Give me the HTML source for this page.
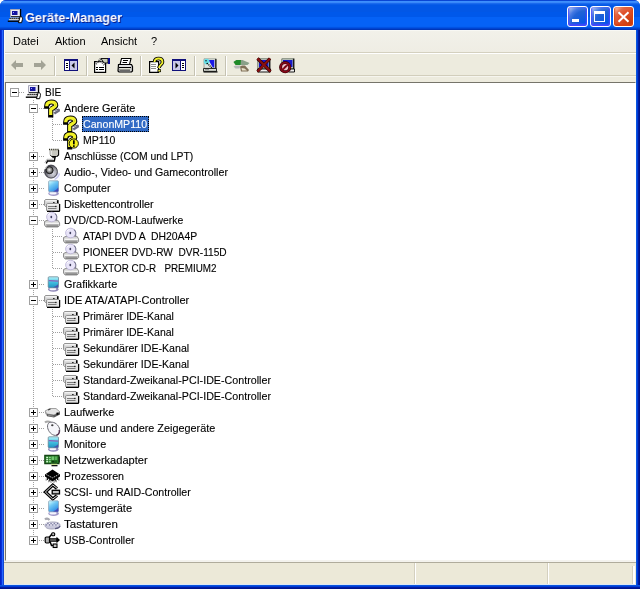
<!DOCTYPE html>
<html><head><meta charset="utf-8">
<style>
html,body{margin:0;padding:0;width:640px;height:589px;overflow:hidden;background:#fff;}
*{box-sizing:border-box;}
body{font-family:"Liberation Sans",sans-serif;font-size:11px;color:#000;position:relative;-webkit-font-smoothing:antialiased;}
#win{position:absolute;left:0;top:0;width:640px;height:589px;background:#0842D8;border-radius:6px 6px 0 0;overflow:hidden;}
.a{position:absolute;}
#title{left:0;top:0;width:640px;height:30px;
 background:linear-gradient(180deg,#0a46d4 0 1px,#3d8ffd 1px 2px,#3a88f8 2px 3px,#1a6aee 3px 4px,#0a5de8 4px 5px,#0257e6 5px 12px,#0058ea 12px 17px,#0562f6 17px 26px,#0560f2 26px 27px,#0052e4 27px 28px,#0044d0 28px 29px,#0036b8 29px 30px);}
#frameL{left:0;top:30px;width:4px;height:559px;background:linear-gradient(90deg,#0024c8 0 1px,#0830d8 1px 2px,#2466ff 2px 3px,#1446d0 3px 4px);}
#frameR{left:636px;top:30px;width:4px;height:559px;background:linear-gradient(90deg,#0855dd 0 1px,#003bda 1px 2px,#001ea0 2px 3px,#00138c 3px 4px);}
#frameB{left:0;top:585px;width:640px;height:4px;background:linear-gradient(180deg,#0855dd 0 1px,#003bda 1px 2px,#001ea0 2px 3px,#00138c 3px 4px);}
#ttext{will-change:transform;transform:scaleX(0.98);transform-origin:0 0;left:25px;top:10px;font-weight:bold;font-size:13px;color:#fff;text-shadow:1px 1px #0a1883;line-height:16px;white-space:pre;}
.tb{top:6px;width:21px;height:21px;border:1px solid #fff;border-radius:3px;
 background:radial-gradient(circle at 90% 90%,#0054e9 0%,#2263d5 55%,#4479e4 70%,#a3bbec 90%,#fff 100%);box-shadow:inset 0 -1px 2px 1px #4646ff;}
.tb.close{background:radial-gradient(circle at 90% 90%,#c43a08 0%,#e0502a 55%,#e06848 72%,#ffc0a8 92%,#fff 100%);box-shadow:inset 0 -1px 2px 1px #d84010;}
#menubar{left:4px;top:30px;width:632px;height:22px;background:linear-gradient(180deg,#F2F1EA,#EFEDE4);}
.mi{will-change:transform;top:36px;line-height:11px;white-space:pre;}
#toolbar{left:4px;top:54px;width:632px;height:28px;background:#EDEBDE;}
.tsep{top:56px;width:2px;height:20px;border-left:1px solid #C5C2B2;border-right:1px solid #fff;}
#tree{left:5px;top:82px;width:631px;height:479px;background:#fff;border-top:1px solid #76746A;border-left:1px solid #76746A;border-right:1px solid #fff;border-bottom:1px solid #F4F3EE;}
#status{left:4px;top:561px;width:632px;height:24px;background:#ECE9D8;border-top:1px solid #F4F3EE;}
.lbl{position:absolute;will-change:transform;-webkit-text-stroke:0.12px currentColor;height:16px;line-height:16px;white-space:pre;padding:0 1px 0 1px;}
.lbl span{position:relative;top:0px;display:inline-block;transform-origin:0 0;}
.sel{background:#316AC5;color:#fff;outline:1px dotted #000;outline-offset:-1px;}
.exp{position:absolute;width:9px;height:9px;border:1px solid #A0A0A0;background:#fff;}
.exp .ph{position:absolute;left:1px;top:3px;width:5px;height:1px;background:#000;}
.exp .pv{position:absolute;left:3px;top:1px;width:1px;height:5px;background:#000;}
.ic{position:absolute;overflow:visible;}
</style></head><body>
<svg width="0" height="0" style="position:absolute"><defs><radialGradient id="gsp" cx="0.65" cy="0.65" r="0.6"><stop offset="0" stop-color="#d8d8e0"/><stop offset="0.6" stop-color="#a0a0a8"/><stop offset="1" stop-color="#505058"/></radialGradient>
<radialGradient id="gsp2" cx="0.45" cy="0.45" r="0.55"><stop offset="0" stop-color="#f8f8f8"/><stop offset="0.4" stop-color="#a8a8a8"/><stop offset="1" stop-color="#404040"/></radialGradient><linearGradient id="gpc" x1="0.2" y1="0" x2="0.8" y2="1"><stop offset="0" stop-color="#c8f8ff"/><stop offset="0.35" stop-color="#70c8f4"/><stop offset="0.8" stop-color="#3a98e8"/><stop offset="1" stop-color="#2a60d0"/></linearGradient><linearGradient id="gmo" x1="0" y1="0" x2="0" y2="1"><stop offset="0" stop-color="#b8f4fc"/><stop offset="0.5" stop-color="#40c0e0"/><stop offset="1" stop-color="#2090c0"/></linearGradient></defs></svg>
<div id="win">
 <div class="a" id="title">
  <svg class="ic" style="left:7px;top:8px" width="16" height="16" viewBox="0 0 16 16"><path d="M3.5 1.5h9.5v7h-9.5z" fill="#ececf4" stroke="#a8a8b8" stroke-width="1"/>
<rect x="13" y="1" width="1.2" height="8" fill="#000"/>
<rect x="4" y="8.3" width="9.5" height="1" fill="#000"/>
<rect x="5" y="3" width="5.5" height="4" fill="#1414a0"/>
<rect x="6" y="4" width="1" height="1" fill="#a0a0ff"/>
<path d="M3 9.5h9.5l0.8 3H1.5z" fill="#f0f0f0"/>
<path d="M2.6 11.2l1-1.2M4.6 11.2l1-1.2M6.6 11.2l1-1.2M8.6 11.2l1-1.2M10.6 11.2l1-1.2" stroke="#000" stroke-width="1.1"/>
<rect x="0.8" y="12.5" width="11.7" height="1.4" fill="#000"/>
<path d="M13.2 8.5c1.8 0 2.6 1.2 2.2 3l-0.8 3.2h-3.2z" fill="#fff" stroke="#000" stroke-width="1"/></svg>
  <div class="a" id="ttext">Geräte-Manager</div>
  <div class="a tb" style="left:567px"><i class="a" style="left:4px;top:12px;width:7px;height:3px;background:#fff"></i></div>
  <div class="a tb" style="left:590px"><i class="a" style="left:3px;top:4px;width:11px;height:11px;border:1px solid #fff;border-top-width:3px"></i></div>
  <div class="a tb close" style="left:613px"><svg class="a" style="left:3px;top:4px" width="13" height="13" viewBox="0 0 13 13"><path d="M1.5 1.2L11.5 10.8M11.5 1.2L1.5 10.8" stroke="#fff" stroke-width="2"/></svg></div>
 </div>
 <div class="a" id="frameL"></div><div class="a" id="frameR"></div><div class="a" id="frameB"></div>
 <div class="a" style="left:4px;top:30px;width:632px;height:555px;background:#ECE9D8"></div>
 <div class="a" id="menubar"></div>
 <div class="a" style="left:4px;top:30px;width:632px;height:1px;background:#F8F8F4"></div>
 <div class="a" style="left:4px;top:52px;width:632px;height:1px;background:#D4D0BF"></div>
 <div class="a" style="left:4px;top:53px;width:632px;height:1px;background:#fff"></div>
 <div class="a" id="toolbar"></div>
 <div class="a" style="left:4px;top:75px;width:632px;height:1px;background:#D2CEBC"></div>
 <div class="a" style="left:4px;top:76px;width:632px;height:1px;background:#F6F5EE"></div>
 <div class="a mi" style="left:13px">Datei</div>
 <div class="a mi" style="left:55px">Aktion</div>
 <div class="a mi" style="left:101px">Ansicht</div>
 <div class="a mi" style="left:151px">?</div>
 <div class="a tsep" style="left:54px"></div>
 <div class="a tsep" style="left:86px"></div>
 <div class="a tsep" style="left:140px"></div>
 <div class="a tsep" style="left:194px"></div>
 <div class="a tsep" style="left:225px"></div>
 <div class="a" style="left:4px;top:30px;width:1px;height:52px;background:#FAFAF6"></div>
 <div class="a" style="left:4px;top:563px;width:1px;height:21px;background:#FAFAF6"></div>
 <svg class="ic" style="left:10px;top:57px" width="16" height="16" viewBox="0 0 16 16">
<path d="M1 8l5-5v3h7v4h-7v3z" fill="#a3a396"/>
</svg><svg class="ic" style="left:31px;top:57px" width="16" height="16" viewBox="0 0 16 16">
<path d="M15 8l-5-5v3h-7v4h7v3z" fill="#a3a396"/>
</svg><svg class="ic" style="left:63px;top:57px" width="16" height="16" viewBox="0 0 16 16">
<rect x="1" y="2" width="14" height="12" fill="#10107a"/>
<rect x="2" y="4" width="4" height="9" fill="#fff"/>
<rect x="7" y="4" width="7" height="9" fill="#c8c8e8"/>
<rect x="3" y="6" width="2" height="1" fill="#000"/>
<rect x="3" y="8" width="2" height="1" fill="#000"/>
<rect x="3" y="10" width="2" height="1" fill="#000"/>
<path d="M8.5 8.5l3-3v6z" fill="#000"/>
</svg><svg class="ic" style="left:94px;top:57px" width="16" height="16" viewBox="0 0 16 16">
<path d="M0.6 4.6h11v10.8h-11z" fill="#fff" stroke="#000" stroke-width="1.2"/>
<rect x="2" y="10" width="2" height="1" fill="#000"/>
<rect x="5" y="10" width="5" height="1" fill="#000"/>
<rect x="2" y="12" width="2" height="1" fill="#000"/>
<rect x="5" y="12" width="5" height="1" fill="#000"/>
<path d="M2 7l4-4.5l4.5 6" fill="none" stroke="#606060" stroke-width="2" stroke-dasharray="1 1"/>
<path d="M7 1.5h7v4.5h-4z" fill="#c8ccb8" stroke="#000" stroke-width="0.9"/>
<rect x="14" y="1" width="2" height="6" fill="#0a0a90"/>
</svg><svg class="ic" style="left:117px;top:57px" width="16" height="16" viewBox="0 0 16 16">
<path d="M4.5 1.5h9.5l-1.5 6h-9.5z" fill="#fff" stroke="#000" stroke-width="1.1"/>
<path d="M6 3.5h5M5.5 5.5h4.5" stroke="#000" stroke-width="1"/>
<path d="M1.5 7.5h13l1 2v4.5l-1 1h-12.5l-1-1z" fill="#d0d0d0" stroke="#000" stroke-width="1.2"/>
<path d="M2 10.5h12M2.5 13h10.5" stroke="#000" stroke-width="1.1"/>
<path d="M2.5 9h11" stroke="#f4f4f4" stroke-width="1"/>
<path d="M3 11.8h10" stroke="#e8e8d8" stroke-width="1.2"/>
</svg><svg class="ic" style="left:148px;top:57px" width="16" height="16" viewBox="0 0 16 16">
<path d="M1.6 4.6h9v10.8h-9z" fill="#fff" stroke="#000" stroke-width="1.2"/>
<path d="M3 7.5h5M3 9.5h5M3 11.5h5" stroke="#808080" stroke-width="0.9"/>
<path d="M6.5 5c0-2.5 2-3.5 4-3.5s4 1 4 3.5c0 2.5-3.5 3-3.5 6" fill="none" stroke="#000" stroke-width="3.6"/>
<path d="M6.5 5c0-2.5 2-3.5 4-3.5s4 1 4 3.5c0 2.5-3.5 3-3.5 6" fill="none" stroke="#f0f030" stroke-width="1.8"/>
<rect x="9.5" y="12.3" width="3.5" height="2.8" fill="#000"/>
<rect x="10.3" y="13" width="2" height="1.5" fill="#e8e830"/>
</svg><svg class="ic" style="left:171px;top:57px" width="16" height="16" viewBox="0 0 16 16">
<rect x="1" y="2" width="14" height="12" fill="#10107a"/>
<rect x="2" y="4" width="7" height="9" fill="#c8c8e8"/>
<rect x="10" y="4" width="4" height="9" fill="#fff"/>
<rect x="11" y="6" width="2" height="1" fill="#000"/>
<rect x="11" y="8" width="2" height="1" fill="#000"/>
<rect x="11" y="10" width="2" height="1" fill="#000"/>
<path d="M7.5 8.5l-3-3v6z" fill="#000"/>
</svg><svg class="ic" style="left:202px;top:57px" width="16" height="16" viewBox="0 0 16 16">
<path d="M2 1.8h11.5v9.5h-11.5z" fill="#e0e4e0" stroke="#909890" stroke-width="0.8"/>
<rect x="13.3" y="1.8" width="1.2" height="9.8" fill="#000"/>
<path d="M6.5 3h5.8v7.5h-1.5z" fill="#1a1ae8"/>
<circle cx="4.6" cy="4.6" r="2.8" fill="#68e0e8"/>
<circle cx="4" cy="3.8" r="0.7" fill="#000"/>
<circle cx="5.2" cy="6.5" r="0.8" fill="#000"/>
<path d="M6.5 7.5l6 6" stroke="#000" stroke-width="1.2" stroke-dasharray="1 0.8"/>
<path d="M1.5 11.5h13v2.8h-13z" fill="#dde0d8" stroke="#000" stroke-width="0.8"/>
<path d="M3 12.6h4" stroke="#808080" stroke-width="0.8"/>
<rect x="1.5" y="14.3" width="14" height="1.2" fill="#000"/>
</svg><svg class="ic" style="left:233px;top:57px" width="16" height="16" viewBox="0 0 16 16">
<path d="M0.5 5l3-2h6l7 3l-2 2h-9z" fill="#8aa088"/>
<path d="M0.5 5l3-2h4.5l-0.5 5h-5z" fill="#208a28"/>
<path d="M0.5 9.5l2-1h5l-1 3h-4z" fill="#b8b8b8"/>
<path d="M7 9.5l2-1h3l4 4.5l-1 1.5h-7z" fill="#807058"/>
<path d="M8.5 11l3 0.5l2.5 2h-5z" fill="#e8e0c8"/>
</svg><svg class="ic" style="left:256px;top:57px" width="16" height="16" viewBox="0 0 16 16">
<path d="M1.8 1.8h11.5v10h-11.5z" fill="#d0d8d0" stroke="#506050" stroke-width="0.8"/>
<rect x="13.2" y="1.5" width="1.2" height="10.5" fill="#000"/>
<rect x="3" y="3" width="9.5" height="7" fill="#1818c8"/>
<path d="M1.5 12h13v3h-13z" fill="#f0f0f0" stroke="#000" stroke-width="0.9"/>
<path d="M1.5 1.5L14.5 14.5M14 1.5L1.5 14.5" stroke="#300000" stroke-width="3.2"/><path d="M1.5 1.5L14.5 14.5M14 1.5L1.5 14.5" stroke="#8a1010" stroke-width="2"/>
</svg><svg class="ic" style="left:279px;top:57px" width="16" height="16" viewBox="0 0 16 16">
<path d="M2.8 1.8h11.5v10h-11.5z" fill="#d0d8d0" stroke="#506050" stroke-width="0.8"/>
<rect x="14.2" y="1.5" width="1.2" height="10.5" fill="#000"/>
<rect x="4" y="3" width="9.5" height="7" fill="#1818c8"/>
<path d="M9 12h6.5v3h-6z" fill="#f0f0f0" stroke="#000" stroke-width="0.9"/>
<circle cx="6.2" cy="10.2" r="4.6" fill="#f0c0c8" stroke="#300008" stroke-width="3"/>
<circle cx="6.2" cy="10.2" r="4.6" fill="none" stroke="#880818" stroke-width="1.8"/>
<path d="M3.5 12.8L8.8 7.6" stroke="#880818" stroke-width="2"/>
<path d="M5 10.5L7 8.8" stroke="#400010" stroke-width="0.8"/>
</svg>
 <div class="a" id="tree"></div>
 <svg class="a" style="left:0;top:0" width="640" height="589" viewBox="0 0 640 589" shape-rendering="crispEdges"><path d="M15 92h1v1h-1zM17 92h1v1h-1zM19 92h1v1h-1zM21 92h1v1h-1zM23 92h1v1h-1zM33 108h1v1h-1zM35 108h1v1h-1zM37 108h1v1h-1zM39 108h1v1h-1zM41 108h1v1h-1zM43 108h1v1h-1zM33 100h1v1h-1zM33 102h1v1h-1zM33 104h1v1h-1zM33 106h1v1h-1zM33 108h1v1h-1zM33 108h1v1h-1zM33 110h1v1h-1zM33 112h1v1h-1zM33 114h1v1h-1zM53 124h1v1h-1zM55 124h1v1h-1zM57 124h1v1h-1zM59 124h1v1h-1zM61 124h1v1h-1zM52 117h1v1h-1zM52 119h1v1h-1zM52 121h1v1h-1zM52 123h1v1h-1zM52 125h1v1h-1zM52 127h1v1h-1zM52 129h1v1h-1zM52 131h1v1h-1zM33 116h1v1h-1zM33 118h1v1h-1zM33 120h1v1h-1zM33 122h1v1h-1zM33 124h1v1h-1zM33 126h1v1h-1zM33 128h1v1h-1zM33 130h1v1h-1zM53 140h1v1h-1zM55 140h1v1h-1zM57 140h1v1h-1zM59 140h1v1h-1zM61 140h1v1h-1zM52 133h1v1h-1zM52 135h1v1h-1zM52 137h1v1h-1zM52 139h1v1h-1zM33 132h1v1h-1zM33 134h1v1h-1zM33 136h1v1h-1zM33 138h1v1h-1zM33 140h1v1h-1zM33 142h1v1h-1zM33 144h1v1h-1zM33 146h1v1h-1zM33 156h1v1h-1zM35 156h1v1h-1zM37 156h1v1h-1zM39 156h1v1h-1zM41 156h1v1h-1zM43 156h1v1h-1zM33 148h1v1h-1zM33 150h1v1h-1zM33 152h1v1h-1zM33 154h1v1h-1zM33 156h1v1h-1zM33 156h1v1h-1zM33 158h1v1h-1zM33 160h1v1h-1zM33 162h1v1h-1zM33 172h1v1h-1zM35 172h1v1h-1zM37 172h1v1h-1zM39 172h1v1h-1zM41 172h1v1h-1zM43 172h1v1h-1zM33 164h1v1h-1zM33 166h1v1h-1zM33 168h1v1h-1zM33 170h1v1h-1zM33 172h1v1h-1zM33 172h1v1h-1zM33 174h1v1h-1zM33 176h1v1h-1zM33 178h1v1h-1zM33 188h1v1h-1zM35 188h1v1h-1zM37 188h1v1h-1zM39 188h1v1h-1zM41 188h1v1h-1zM43 188h1v1h-1zM33 180h1v1h-1zM33 182h1v1h-1zM33 184h1v1h-1zM33 186h1v1h-1zM33 188h1v1h-1zM33 188h1v1h-1zM33 190h1v1h-1zM33 192h1v1h-1zM33 194h1v1h-1zM33 204h1v1h-1zM35 204h1v1h-1zM37 204h1v1h-1zM39 204h1v1h-1zM41 204h1v1h-1zM43 204h1v1h-1zM33 196h1v1h-1zM33 198h1v1h-1zM33 200h1v1h-1zM33 202h1v1h-1zM33 204h1v1h-1zM33 204h1v1h-1zM33 206h1v1h-1zM33 208h1v1h-1zM33 210h1v1h-1zM33 220h1v1h-1zM35 220h1v1h-1zM37 220h1v1h-1zM39 220h1v1h-1zM41 220h1v1h-1zM43 220h1v1h-1zM33 212h1v1h-1zM33 214h1v1h-1zM33 216h1v1h-1zM33 218h1v1h-1zM33 220h1v1h-1zM33 220h1v1h-1zM33 222h1v1h-1zM33 224h1v1h-1zM33 226h1v1h-1zM53 236h1v1h-1zM55 236h1v1h-1zM57 236h1v1h-1zM59 236h1v1h-1zM61 236h1v1h-1zM52 229h1v1h-1zM52 231h1v1h-1zM52 233h1v1h-1zM52 235h1v1h-1zM52 237h1v1h-1zM52 239h1v1h-1zM52 241h1v1h-1zM52 243h1v1h-1zM33 228h1v1h-1zM33 230h1v1h-1zM33 232h1v1h-1zM33 234h1v1h-1zM33 236h1v1h-1zM33 238h1v1h-1zM33 240h1v1h-1zM33 242h1v1h-1zM53 252h1v1h-1zM55 252h1v1h-1zM57 252h1v1h-1zM59 252h1v1h-1zM61 252h1v1h-1zM52 245h1v1h-1zM52 247h1v1h-1zM52 249h1v1h-1zM52 251h1v1h-1zM52 253h1v1h-1zM52 255h1v1h-1zM52 257h1v1h-1zM52 259h1v1h-1zM33 244h1v1h-1zM33 246h1v1h-1zM33 248h1v1h-1zM33 250h1v1h-1zM33 252h1v1h-1zM33 254h1v1h-1zM33 256h1v1h-1zM33 258h1v1h-1zM53 268h1v1h-1zM55 268h1v1h-1zM57 268h1v1h-1zM59 268h1v1h-1zM61 268h1v1h-1zM52 261h1v1h-1zM52 263h1v1h-1zM52 265h1v1h-1zM52 267h1v1h-1zM33 260h1v1h-1zM33 262h1v1h-1zM33 264h1v1h-1zM33 266h1v1h-1zM33 268h1v1h-1zM33 270h1v1h-1zM33 272h1v1h-1zM33 274h1v1h-1zM33 284h1v1h-1zM35 284h1v1h-1zM37 284h1v1h-1zM39 284h1v1h-1zM41 284h1v1h-1zM43 284h1v1h-1zM33 276h1v1h-1zM33 278h1v1h-1zM33 280h1v1h-1zM33 282h1v1h-1zM33 284h1v1h-1zM33 284h1v1h-1zM33 286h1v1h-1zM33 288h1v1h-1zM33 290h1v1h-1zM33 300h1v1h-1zM35 300h1v1h-1zM37 300h1v1h-1zM39 300h1v1h-1zM41 300h1v1h-1zM43 300h1v1h-1zM33 292h1v1h-1zM33 294h1v1h-1zM33 296h1v1h-1zM33 298h1v1h-1zM33 300h1v1h-1zM33 300h1v1h-1zM33 302h1v1h-1zM33 304h1v1h-1zM33 306h1v1h-1zM53 316h1v1h-1zM55 316h1v1h-1zM57 316h1v1h-1zM59 316h1v1h-1zM61 316h1v1h-1zM52 309h1v1h-1zM52 311h1v1h-1zM52 313h1v1h-1zM52 315h1v1h-1zM52 317h1v1h-1zM52 319h1v1h-1zM52 321h1v1h-1zM52 323h1v1h-1zM33 308h1v1h-1zM33 310h1v1h-1zM33 312h1v1h-1zM33 314h1v1h-1zM33 316h1v1h-1zM33 318h1v1h-1zM33 320h1v1h-1zM33 322h1v1h-1zM53 332h1v1h-1zM55 332h1v1h-1zM57 332h1v1h-1zM59 332h1v1h-1zM61 332h1v1h-1zM52 325h1v1h-1zM52 327h1v1h-1zM52 329h1v1h-1zM52 331h1v1h-1zM52 333h1v1h-1zM52 335h1v1h-1zM52 337h1v1h-1zM52 339h1v1h-1zM33 324h1v1h-1zM33 326h1v1h-1zM33 328h1v1h-1zM33 330h1v1h-1zM33 332h1v1h-1zM33 334h1v1h-1zM33 336h1v1h-1zM33 338h1v1h-1zM53 348h1v1h-1zM55 348h1v1h-1zM57 348h1v1h-1zM59 348h1v1h-1zM61 348h1v1h-1zM52 341h1v1h-1zM52 343h1v1h-1zM52 345h1v1h-1zM52 347h1v1h-1zM52 349h1v1h-1zM52 351h1v1h-1zM52 353h1v1h-1zM52 355h1v1h-1zM33 340h1v1h-1zM33 342h1v1h-1zM33 344h1v1h-1zM33 346h1v1h-1zM33 348h1v1h-1zM33 350h1v1h-1zM33 352h1v1h-1zM33 354h1v1h-1zM53 364h1v1h-1zM55 364h1v1h-1zM57 364h1v1h-1zM59 364h1v1h-1zM61 364h1v1h-1zM52 357h1v1h-1zM52 359h1v1h-1zM52 361h1v1h-1zM52 363h1v1h-1zM52 365h1v1h-1zM52 367h1v1h-1zM52 369h1v1h-1zM52 371h1v1h-1zM33 356h1v1h-1zM33 358h1v1h-1zM33 360h1v1h-1zM33 362h1v1h-1zM33 364h1v1h-1zM33 366h1v1h-1zM33 368h1v1h-1zM33 370h1v1h-1zM53 380h1v1h-1zM55 380h1v1h-1zM57 380h1v1h-1zM59 380h1v1h-1zM61 380h1v1h-1zM52 373h1v1h-1zM52 375h1v1h-1zM52 377h1v1h-1zM52 379h1v1h-1zM52 381h1v1h-1zM52 383h1v1h-1zM52 385h1v1h-1zM52 387h1v1h-1zM33 372h1v1h-1zM33 374h1v1h-1zM33 376h1v1h-1zM33 378h1v1h-1zM33 380h1v1h-1zM33 382h1v1h-1zM33 384h1v1h-1zM33 386h1v1h-1zM53 396h1v1h-1zM55 396h1v1h-1zM57 396h1v1h-1zM59 396h1v1h-1zM61 396h1v1h-1zM52 389h1v1h-1zM52 391h1v1h-1zM52 393h1v1h-1zM52 395h1v1h-1zM33 388h1v1h-1zM33 390h1v1h-1zM33 392h1v1h-1zM33 394h1v1h-1zM33 396h1v1h-1zM33 398h1v1h-1zM33 400h1v1h-1zM33 402h1v1h-1zM33 412h1v1h-1zM35 412h1v1h-1zM37 412h1v1h-1zM39 412h1v1h-1zM41 412h1v1h-1zM43 412h1v1h-1zM33 404h1v1h-1zM33 406h1v1h-1zM33 408h1v1h-1zM33 410h1v1h-1zM33 412h1v1h-1zM33 412h1v1h-1zM33 414h1v1h-1zM33 416h1v1h-1zM33 418h1v1h-1zM33 428h1v1h-1zM35 428h1v1h-1zM37 428h1v1h-1zM39 428h1v1h-1zM41 428h1v1h-1zM43 428h1v1h-1zM33 420h1v1h-1zM33 422h1v1h-1zM33 424h1v1h-1zM33 426h1v1h-1zM33 428h1v1h-1zM33 428h1v1h-1zM33 430h1v1h-1zM33 432h1v1h-1zM33 434h1v1h-1zM33 444h1v1h-1zM35 444h1v1h-1zM37 444h1v1h-1zM39 444h1v1h-1zM41 444h1v1h-1zM43 444h1v1h-1zM33 436h1v1h-1zM33 438h1v1h-1zM33 440h1v1h-1zM33 442h1v1h-1zM33 444h1v1h-1zM33 444h1v1h-1zM33 446h1v1h-1zM33 448h1v1h-1zM33 450h1v1h-1zM33 460h1v1h-1zM35 460h1v1h-1zM37 460h1v1h-1zM39 460h1v1h-1zM41 460h1v1h-1zM43 460h1v1h-1zM33 452h1v1h-1zM33 454h1v1h-1zM33 456h1v1h-1zM33 458h1v1h-1zM33 460h1v1h-1zM33 460h1v1h-1zM33 462h1v1h-1zM33 464h1v1h-1zM33 466h1v1h-1zM33 476h1v1h-1zM35 476h1v1h-1zM37 476h1v1h-1zM39 476h1v1h-1zM41 476h1v1h-1zM43 476h1v1h-1zM33 468h1v1h-1zM33 470h1v1h-1zM33 472h1v1h-1zM33 474h1v1h-1zM33 476h1v1h-1zM33 476h1v1h-1zM33 478h1v1h-1zM33 480h1v1h-1zM33 482h1v1h-1zM33 492h1v1h-1zM35 492h1v1h-1zM37 492h1v1h-1zM39 492h1v1h-1zM41 492h1v1h-1zM43 492h1v1h-1zM33 484h1v1h-1zM33 486h1v1h-1zM33 488h1v1h-1zM33 490h1v1h-1zM33 492h1v1h-1zM33 492h1v1h-1zM33 494h1v1h-1zM33 496h1v1h-1zM33 498h1v1h-1zM33 508h1v1h-1zM35 508h1v1h-1zM37 508h1v1h-1zM39 508h1v1h-1zM41 508h1v1h-1zM43 508h1v1h-1zM33 500h1v1h-1zM33 502h1v1h-1zM33 504h1v1h-1zM33 506h1v1h-1zM33 508h1v1h-1zM33 508h1v1h-1zM33 510h1v1h-1zM33 512h1v1h-1zM33 514h1v1h-1zM33 524h1v1h-1zM35 524h1v1h-1zM37 524h1v1h-1zM39 524h1v1h-1zM41 524h1v1h-1zM43 524h1v1h-1zM33 516h1v1h-1zM33 518h1v1h-1zM33 520h1v1h-1zM33 522h1v1h-1zM33 524h1v1h-1zM33 524h1v1h-1zM33 526h1v1h-1zM33 528h1v1h-1zM33 530h1v1h-1zM33 540h1v1h-1zM35 540h1v1h-1zM37 540h1v1h-1zM39 540h1v1h-1zM41 540h1v1h-1zM43 540h1v1h-1zM33 532h1v1h-1zM33 534h1v1h-1zM33 536h1v1h-1zM33 538h1v1h-1zM33 540h1v1h-1z" fill="#A0A0A0"/></svg>
 <svg class="ic" style="left:25px;top:84px" width="16" height="16" viewBox="0 0 16 16"><path d="M3.5 1.5h9.5v7h-9.5z" fill="#ececf4" stroke="#a8a8b8" stroke-width="1"/>
<rect x="13" y="1" width="1.2" height="8" fill="#000"/>
<rect x="4" y="8.3" width="9.5" height="1" fill="#000"/>
<rect x="5" y="3" width="5.5" height="4" fill="#1414a0"/>
<rect x="6" y="4" width="1" height="1" fill="#a0a0ff"/>
<path d="M3 9.5h9.5l0.8 3H1.5z" fill="#f0f0f0"/>
<path d="M2.6 11.2l1-1.2M4.6 11.2l1-1.2M6.6 11.2l1-1.2M8.6 11.2l1-1.2M10.6 11.2l1-1.2" stroke="#000" stroke-width="1.1"/>
<rect x="0.8" y="12.5" width="11.7" height="1.4" fill="#000"/>
<path d="M13.2 8.5c1.8 0 2.6 1.2 2.2 3l-0.8 3.2h-3.2z" fill="#fff" stroke="#000" stroke-width="1"/></svg>
<div class="exp" style="left:10px;top:88px"><i class="ph"></i></div>
<div class="lbl" style="left:44px;top:84px;width:20px;"><span style="transform:scaleX(0.9167)">BIE</span></div>
<svg class="ic" style="left:44px;top:100px" width="16" height="16" viewBox="0 0 16 16"><path d="M9.5 12.5L15.8 8.8L16 11.2L11 14.5z" fill="#6c6c80"/>
<path d="M10.5 10.5L15 9" stroke="#303050" stroke-width="0.8"/>
<path d="M2.7 6.2C2.7 2.8 5 2 7.4 2C10 2 11.7 3.2 11.7 5.2C11.7 7.4 8.2 7.6 6.7 9.6V15" fill="none" stroke="#000" stroke-width="5.2" stroke-linecap="square"/>
<path d="M2.7 6.2C2.7 2.8 5 2 7.4 2C10 2 11.7 3.2 11.7 5.2C11.7 7.4 8.2 7.6 6.7 9.6V15" fill="none" stroke="#f2f22a" stroke-width="3.2"/>
<path d="M11 3.5C11.8 4.3 11.5 6 10.5 6.5" fill="none" stroke="#c8c820" stroke-width="0.9"/>
<rect x="5" y="6.4" width="1.3" height="1.3" fill="#fff"/></svg>
<div class="exp" style="left:29px;top:104px"><i class="ph"></i></div>
<div class="lbl" style="left:63px;top:100px;width:75px;"><span style="transform:scaleX(0.9889)">Andere Geräte</span></div>
<svg class="ic" style="left:63px;top:116px" width="16" height="16" viewBox="0 0 16 16"><path d="M9.5 12.5L15.8 8.8L16 11.2L11 14.5z" fill="#6c6c80"/>
<path d="M10.5 10.5L15 9" stroke="#303050" stroke-width="0.8"/>
<path d="M2.7 6.2C2.7 2.8 5 2 7.4 2C10 2 11.7 3.2 11.7 5.2C11.7 7.4 8.2 7.6 6.7 9.6V15" fill="none" stroke="#000" stroke-width="5.2" stroke-linecap="square"/>
<path d="M2.7 6.2C2.7 2.8 5 2 7.4 2C10 2 11.7 3.2 11.7 5.2C11.7 7.4 8.2 7.6 6.7 9.6V15" fill="none" stroke="#f2f22a" stroke-width="3.2"/>
<path d="M11 3.5C11.8 4.3 11.5 6 10.5 6.5" fill="none" stroke="#c8c820" stroke-width="0.9"/>
<rect x="5" y="6.4" width="1.3" height="1.3" fill="#fff"/></svg>
<div class="lbl sel" style="left:82px;top:116px;width:67px;"><span style="transform:scaleX(0.9650)">CanonMP110</span></div>
<svg class="ic" style="left:63px;top:132px" width="16" height="16" viewBox="0 0 16 16"><path d="M2.7 6.2C2.7 2.8 5 2 7.4 2C10 2 11.7 3.2 11.7 5.2C11.7 7.4 8.2 7.6 6.7 9.6V15" fill="none" stroke="#000" stroke-width="5.2" stroke-linecap="square"/>
<path d="M2.7 6.2C2.7 2.8 5 2 7.4 2C10 2 11.7 3.2 11.7 5.2C11.7 7.4 8.2 7.6 6.7 9.6V15" fill="none" stroke="#f2f22a" stroke-width="3.2"/>
<rect x="5" y="6.4" width="1.3" height="1.3" fill="#fff"/>
<circle cx="10.8" cy="11.5" r="4.6" fill="#f4f020" stroke="#000" stroke-width="0.9"/>
<rect x="10" y="8.3" width="1.7" height="4" fill="#000"/>
<rect x="10" y="13.3" width="1.7" height="1.6" fill="#000"/></svg>
<div class="lbl" style="left:82px;top:132px;width:36px;"><span style="transform:scaleX(0.9529)">MP110</span></div>
<svg class="ic" style="left:44px;top:148px" width="16" height="16" viewBox="0 0 16 16"><path d="M5.8 1.8h9l-0.8 5.2l-1.8 1.5h-4.5l-1.6-1.5z" fill="#c8c8c0"/>
<path d="M7 2.5v4.5" stroke="#f8f8f8" stroke-width="1.2"/>
<path d="M6 2.5v4.2" stroke="#909090" stroke-width="0.8"/>
<path d="M14.6 2v5l-1.8 1.6" fill="none" stroke="#000" stroke-width="1.1"/>
<path d="M6.3 7.2l1.4 1.3h5" fill="none" stroke="#000" stroke-width="1"/>
<path d="M5 1.5h10" stroke="#303020" stroke-width="1.3" stroke-dasharray="1.2 0.9"/>
<rect x="8.3" y="8.5" width="3.6" height="1.3" fill="#000"/>
<path d="M11 9.5L10.3 13H3.5L2.3 15.5" fill="none" stroke="#000" stroke-width="1.4"/>
<path d="M9.3 10.2L8.8 11.3H3L0.8 14.8" fill="none" stroke="#a8a8a8" stroke-width="0.9"/></svg>
<div class="exp" style="left:29px;top:152px"><i class="ph"></i><i class="pv"></i></div>
<div class="lbl" style="left:63px;top:148px;width:132px;"><span style="transform:scaleX(0.9441)">Anschlüsse (COM und LPT)</span></div>
<svg class="ic" style="left:44px;top:164px" width="16" height="16" viewBox="0 0 16 16"><path d="M9 13.5a7 7 0 0 0 5-5M10.5 15.5a9 9 0 0 0 5-6" fill="none" stroke="#c8c8f0" stroke-width="1.2"/>
<ellipse cx="7" cy="7.6" rx="6.4" ry="6.5" fill="url(#gsp)" stroke="#3a3a42" stroke-width="0.9"/>
<circle cx="5.6" cy="6.2" r="3.5" fill="url(#gsp2)" stroke="#202020" stroke-width="1"/>
<path d="M1.5 5a5 5 0 0 1 1.5-2.5" stroke="#f0f0f0" stroke-width="0.9" fill="none"/></svg>
<div class="exp" style="left:29px;top:168px"><i class="ph"></i><i class="pv"></i></div>
<div class="lbl" style="left:63px;top:164px;width:167px;"><span style="transform:scaleX(0.9692)">Audio-, Video- und Gamecontroller</span></div>
<svg class="ic" style="left:44px;top:180px" width="16" height="16" viewBox="0 0 16 16"><ellipse cx="9.6" cy="13.4" rx="5.3" ry="2.5" fill="#a098c8"/>
<ellipse cx="9" cy="13" rx="3.6" ry="1.5" fill="#f4f4ff"/>
<path d="M5.5 0.8h8c0.6 0 1 0.4 1 1V10.8c0 0.6-0.4 1-1 1H5.6c-0.6 0-1-0.4-1-1V1.8c0-0.6 0.4-1 0.9-1z" fill="url(#gpc)" stroke="#8098b0" stroke-width="0.7"/>
<path d="M9 11.5q3-0.5 5.3-4v3.6q0 0.7-0.7 0.7z" fill="#4a40b0" opacity="0.85"/></svg>
<div class="exp" style="left:29px;top:184px"><i class="ph"></i><i class="pv"></i></div>
<div class="lbl" style="left:63px;top:180px;width:51px;"><span style="transform:scaleX(0.9612)">Computer</span></div>
<svg class="ic" style="left:44px;top:196px" width="16" height="16" viewBox="0 0 16 16"><path d="M1.5 3.5h11.5l1 1v6h-12.5l-1-1v-5z" fill="#d4d4d4" stroke="#8a8a8a" stroke-width="0.9"/>
<rect x="13" y="4.2" width="1.5" height="6" fill="#000"/>
<path d="M2 4.8h10.5" stroke="#fff" stroke-width="1"/>
<rect x="9.2" y="6" width="1.3" height="1.3" fill="#000"/>
<path d="M3.5 7.5h11.5l0.6 0.6v6.9h-12.5l-0.6-0.6v-6.3z" fill="#e2e2e2" stroke="#8a8a8a" stroke-width="0.9"/>
<rect x="15" y="8" width="1.2" height="7" fill="#000"/>
<rect x="3" y="14.8" width="12.8" height="1.2" fill="#000"/>
<path d="M4 10.5h7M4 12.5h8.5" stroke="#707070" stroke-width="0.9"/>
<rect x="11.2" y="9.8" width="1.3" height="1.3" fill="#000"/>
<path d="M4 8.8h10.5" stroke="#fff" stroke-width="0.8"/></svg>
<div class="exp" style="left:29px;top:200px"><i class="ph"></i><i class="pv"></i></div>
<div class="lbl" style="left:63px;top:196px;width:93px;"><span style="transform:scaleX(0.9846)">Diskettencontroller</span></div>
<svg class="ic" style="left:44px;top:212px" width="16" height="16" viewBox="0 0 16 16"><path d="M0.5 9.5L3 8.3h11l1.6 2.7v2.5l-1.5 1.5H2l-1.5-2z" fill="#d4d4d4" stroke="#7a7a7a" stroke-width="0.8"/>
<path d="M1.5 11.3h13.5" stroke="#f8f8f8" stroke-width="1.2"/>
<path d="M2.5 14h11.8" stroke="#5a5a5a" stroke-width="1"/>
<path d="M2 12.7h12.5" stroke="#a0a0a0" stroke-width="0.8"/>
<ellipse cx="7.6" cy="5" rx="5" ry="4.8" fill="#e8e4f8" stroke="#b0a8d0" stroke-width="0.7"/>
<path d="M11.2 1.6a5 5 0 0 1 0.6 6.8" stroke="#707088" stroke-width="1.1" fill="none"/>
<ellipse cx="7.3" cy="5" rx="0.9" ry="1.3" fill="#404060"/>
<path d="M4 3.3a4 4 0 0 1 2.5-2" stroke="#fff" stroke-width="1" fill="none"/></svg>
<div class="exp" style="left:29px;top:216px"><i class="ph"></i></div>
<div class="lbl" style="left:63px;top:212px;width:123px;"><span style="transform:scaleX(0.9468)">DVD/CD-ROM-Laufwerke</span></div>
<svg class="ic" style="left:63px;top:228px" width="16" height="16" viewBox="0 0 16 16"><path d="M0.5 9.5L3 8.3h11l1.6 2.7v2.5l-1.5 1.5H2l-1.5-2z" fill="#d4d4d4" stroke="#7a7a7a" stroke-width="0.8"/>
<path d="M1.5 11.3h13.5" stroke="#f8f8f8" stroke-width="1.2"/>
<path d="M2.5 14h11.8" stroke="#5a5a5a" stroke-width="1"/>
<path d="M2 12.7h12.5" stroke="#a0a0a0" stroke-width="0.8"/>
<ellipse cx="7.6" cy="5" rx="5" ry="4.8" fill="#e8e4f8" stroke="#b0a8d0" stroke-width="0.7"/>
<path d="M11.2 1.6a5 5 0 0 1 0.6 6.8" stroke="#707088" stroke-width="1.1" fill="none"/>
<ellipse cx="7.3" cy="5" rx="0.9" ry="1.3" fill="#404060"/>
<path d="M4 3.3a4 4 0 0 1 2.5-2" stroke="#fff" stroke-width="1" fill="none"/></svg>
<div class="lbl" style="left:82px;top:228px;width:117px;"><span style="transform:scaleX(0.9467)">ATAPI DVD A  DH20A4P</span></div>
<svg class="ic" style="left:63px;top:244px" width="16" height="16" viewBox="0 0 16 16"><path d="M0.5 9.5L3 8.3h11l1.6 2.7v2.5l-1.5 1.5H2l-1.5-2z" fill="#d4d4d4" stroke="#7a7a7a" stroke-width="0.8"/>
<path d="M1.5 11.3h13.5" stroke="#f8f8f8" stroke-width="1.2"/>
<path d="M2.5 14h11.8" stroke="#5a5a5a" stroke-width="1"/>
<path d="M2 12.7h12.5" stroke="#a0a0a0" stroke-width="0.8"/>
<ellipse cx="7.6" cy="5" rx="5" ry="4.8" fill="#e8e4f8" stroke="#b0a8d0" stroke-width="0.7"/>
<path d="M11.2 1.6a5 5 0 0 1 0.6 6.8" stroke="#707088" stroke-width="1.1" fill="none"/>
<ellipse cx="7.3" cy="5" rx="0.9" ry="1.3" fill="#404060"/>
<path d="M4 3.3a4 4 0 0 1 2.5-2" stroke="#fff" stroke-width="1" fill="none"/></svg>
<div class="lbl" style="left:82px;top:244px;width:147px;"><span style="transform:scaleX(0.9205)">PIONEER DVD-RW  DVR-115D</span></div>
<svg class="ic" style="left:63px;top:260px" width="16" height="16" viewBox="0 0 16 16"><path d="M0.5 9.5L3 8.3h11l1.6 2.7v2.5l-1.5 1.5H2l-1.5-2z" fill="#d4d4d4" stroke="#7a7a7a" stroke-width="0.8"/>
<path d="M1.5 11.3h13.5" stroke="#f8f8f8" stroke-width="1.2"/>
<path d="M2.5 14h11.8" stroke="#5a5a5a" stroke-width="1"/>
<path d="M2 12.7h12.5" stroke="#a0a0a0" stroke-width="0.8"/>
<ellipse cx="7.6" cy="5" rx="5" ry="4.8" fill="#e8e4f8" stroke="#b0a8d0" stroke-width="0.7"/>
<path d="M11.2 1.6a5 5 0 0 1 0.6 6.8" stroke="#707088" stroke-width="1.1" fill="none"/>
<ellipse cx="7.3" cy="5" rx="0.9" ry="1.3" fill="#404060"/>
<path d="M4 3.3a4 4 0 0 1 2.5-2" stroke="#fff" stroke-width="1" fill="none"/></svg>
<div class="lbl" style="left:82px;top:260px;width:137px;"><span style="transform:scaleX(0.8960)">PLEXTOR CD-R   PREMIUM2</span></div>
<svg class="ic" style="left:44px;top:276px" width="16" height="16" viewBox="0 0 16 16"><ellipse cx="9.3" cy="13.3" rx="5.2" ry="2.4" fill="#9088b8"/>
<ellipse cx="8.8" cy="12.9" rx="3.5" ry="1.4" fill="#f8f8ff"/>
<path d="M5 0.8h8.5c0.6 0 1 0.4 1 1V10.8c0 0.6-0.4 1-1 1H5.2c-0.6 0-1-0.4-1-1V1.8c0-0.6 0.3-1 0.8-1z" fill="url(#gmo)" stroke="#607888" stroke-width="0.7"/>
<path d="M4.8 4.6l9.4 0.6" stroke="#8860b8" stroke-width="1.3"/>
<path d="M9 11.3q3.5-0.8 5-3v2.6q0 0.6-0.6 0.6z" fill="#5040a8" opacity="0.8"/></svg>
<div class="exp" style="left:29px;top:280px"><i class="ph"></i><i class="pv"></i></div>
<div class="lbl" style="left:63px;top:276px;width:57px;"><span style="transform:scaleX(0.9889)">Grafikkarte</span></div>
<svg class="ic" style="left:44px;top:292px" width="16" height="16" viewBox="0 0 16 16"><path d="M1.5 3.5h11.5l1 1v6h-12.5l-1-1v-5z" fill="#d4d4d4" stroke="#8a8a8a" stroke-width="0.9"/>
<rect x="13" y="4.2" width="1.5" height="6" fill="#000"/>
<path d="M2 4.8h10.5" stroke="#fff" stroke-width="1"/>
<rect x="9.2" y="6" width="1.3" height="1.3" fill="#000"/>
<path d="M3.5 7.5h11.5l0.6 0.6v6.9h-12.5l-0.6-0.6v-6.3z" fill="#e2e2e2" stroke="#8a8a8a" stroke-width="0.9"/>
<rect x="15" y="8" width="1.2" height="7" fill="#000"/>
<rect x="3" y="14.8" width="12.8" height="1.2" fill="#000"/>
<path d="M4 10.5h7M4 12.5h8.5" stroke="#707070" stroke-width="0.9"/>
<rect x="11.2" y="9.8" width="1.3" height="1.3" fill="#000"/>
<path d="M4 8.8h10.5" stroke="#fff" stroke-width="0.8"/></svg>
<div class="exp" style="left:29px;top:296px"><i class="ph"></i></div>
<div class="lbl" style="left:63px;top:292px;width:129px;"><span style="transform:scaleX(1.0008)">IDE ATA/ATAPI-Controller</span></div>
<svg class="ic" style="left:63px;top:308px" width="16" height="16" viewBox="0 0 16 16"><path d="M1.5 3.5h11.5l1 1v6h-12.5l-1-1v-5z" fill="#d4d4d4" stroke="#8a8a8a" stroke-width="0.9"/>
<rect x="13" y="4.2" width="1.5" height="6" fill="#000"/>
<path d="M2 4.8h10.5" stroke="#fff" stroke-width="1"/>
<rect x="9.2" y="6" width="1.3" height="1.3" fill="#000"/>
<path d="M3.5 7.5h11.5l0.6 0.6v6.9h-12.5l-0.6-0.6v-6.3z" fill="#e2e2e2" stroke="#8a8a8a" stroke-width="0.9"/>
<rect x="15" y="8" width="1.2" height="7" fill="#000"/>
<rect x="3" y="14.8" width="12.8" height="1.2" fill="#000"/>
<path d="M4 10.5h7M4 12.5h8.5" stroke="#707070" stroke-width="0.9"/>
<rect x="11.2" y="9.8" width="1.3" height="1.3" fill="#000"/>
<path d="M4 8.8h10.5" stroke="#fff" stroke-width="0.8"/></svg>
<div class="lbl" style="left:82px;top:308px;width:94px;"><span style="transform:scaleX(0.9537)">Primärer IDE-Kanal</span></div>
<svg class="ic" style="left:63px;top:324px" width="16" height="16" viewBox="0 0 16 16"><path d="M1.5 3.5h11.5l1 1v6h-12.5l-1-1v-5z" fill="#d4d4d4" stroke="#8a8a8a" stroke-width="0.9"/>
<rect x="13" y="4.2" width="1.5" height="6" fill="#000"/>
<path d="M2 4.8h10.5" stroke="#fff" stroke-width="1"/>
<rect x="9.2" y="6" width="1.3" height="1.3" fill="#000"/>
<path d="M3.5 7.5h11.5l0.6 0.6v6.9h-12.5l-0.6-0.6v-6.3z" fill="#e2e2e2" stroke="#8a8a8a" stroke-width="0.9"/>
<rect x="15" y="8" width="1.2" height="7" fill="#000"/>
<rect x="3" y="14.8" width="12.8" height="1.2" fill="#000"/>
<path d="M4 10.5h7M4 12.5h8.5" stroke="#707070" stroke-width="0.9"/>
<rect x="11.2" y="9.8" width="1.3" height="1.3" fill="#000"/>
<path d="M4 8.8h10.5" stroke="#fff" stroke-width="0.8"/></svg>
<div class="lbl" style="left:82px;top:324px;width:94px;"><span style="transform:scaleX(0.9537)">Primärer IDE-Kanal</span></div>
<svg class="ic" style="left:63px;top:340px" width="16" height="16" viewBox="0 0 16 16"><path d="M1.5 3.5h11.5l1 1v6h-12.5l-1-1v-5z" fill="#d4d4d4" stroke="#8a8a8a" stroke-width="0.9"/>
<rect x="13" y="4.2" width="1.5" height="6" fill="#000"/>
<path d="M2 4.8h10.5" stroke="#fff" stroke-width="1"/>
<rect x="9.2" y="6" width="1.3" height="1.3" fill="#000"/>
<path d="M3.5 7.5h11.5l0.6 0.6v6.9h-12.5l-0.6-0.6v-6.3z" fill="#e2e2e2" stroke="#8a8a8a" stroke-width="0.9"/>
<rect x="15" y="8" width="1.2" height="7" fill="#000"/>
<rect x="3" y="14.8" width="12.8" height="1.2" fill="#000"/>
<path d="M4 10.5h7M4 12.5h8.5" stroke="#707070" stroke-width="0.9"/>
<rect x="11.2" y="9.8" width="1.3" height="1.3" fill="#000"/>
<path d="M4 8.8h10.5" stroke="#fff" stroke-width="0.8"/></svg>
<div class="lbl" style="left:82px;top:340px;width:110px;"><span style="transform:scaleX(0.9645)">Sekundärer IDE-Kanal</span></div>
<svg class="ic" style="left:63px;top:356px" width="16" height="16" viewBox="0 0 16 16"><path d="M1.5 3.5h11.5l1 1v6h-12.5l-1-1v-5z" fill="#d4d4d4" stroke="#8a8a8a" stroke-width="0.9"/>
<rect x="13" y="4.2" width="1.5" height="6" fill="#000"/>
<path d="M2 4.8h10.5" stroke="#fff" stroke-width="1"/>
<rect x="9.2" y="6" width="1.3" height="1.3" fill="#000"/>
<path d="M3.5 7.5h11.5l0.6 0.6v6.9h-12.5l-0.6-0.6v-6.3z" fill="#e2e2e2" stroke="#8a8a8a" stroke-width="0.9"/>
<rect x="15" y="8" width="1.2" height="7" fill="#000"/>
<rect x="3" y="14.8" width="12.8" height="1.2" fill="#000"/>
<path d="M4 10.5h7M4 12.5h8.5" stroke="#707070" stroke-width="0.9"/>
<rect x="11.2" y="9.8" width="1.3" height="1.3" fill="#000"/>
<path d="M4 8.8h10.5" stroke="#fff" stroke-width="0.8"/></svg>
<div class="lbl" style="left:82px;top:356px;width:110px;"><span style="transform:scaleX(0.9645)">Sekundärer IDE-Kanal</span></div>
<svg class="ic" style="left:63px;top:372px" width="16" height="16" viewBox="0 0 16 16"><path d="M1.5 3.5h11.5l1 1v6h-12.5l-1-1v-5z" fill="#d4d4d4" stroke="#8a8a8a" stroke-width="0.9"/>
<rect x="13" y="4.2" width="1.5" height="6" fill="#000"/>
<path d="M2 4.8h10.5" stroke="#fff" stroke-width="1"/>
<rect x="9.2" y="6" width="1.3" height="1.3" fill="#000"/>
<path d="M3.5 7.5h11.5l0.6 0.6v6.9h-12.5l-0.6-0.6v-6.3z" fill="#e2e2e2" stroke="#8a8a8a" stroke-width="0.9"/>
<rect x="15" y="8" width="1.2" height="7" fill="#000"/>
<rect x="3" y="14.8" width="12.8" height="1.2" fill="#000"/>
<path d="M4 10.5h7M4 12.5h8.5" stroke="#707070" stroke-width="0.9"/>
<rect x="11.2" y="9.8" width="1.3" height="1.3" fill="#000"/>
<path d="M4 8.8h10.5" stroke="#fff" stroke-width="0.8"/></svg>
<div class="lbl" style="left:82px;top:372px;width:191px;"><span style="transform:scaleX(0.9731)">Standard-Zweikanal-PCI-IDE-Controller</span></div>
<svg class="ic" style="left:63px;top:388px" width="16" height="16" viewBox="0 0 16 16"><path d="M1.5 3.5h11.5l1 1v6h-12.5l-1-1v-5z" fill="#d4d4d4" stroke="#8a8a8a" stroke-width="0.9"/>
<rect x="13" y="4.2" width="1.5" height="6" fill="#000"/>
<path d="M2 4.8h10.5" stroke="#fff" stroke-width="1"/>
<rect x="9.2" y="6" width="1.3" height="1.3" fill="#000"/>
<path d="M3.5 7.5h11.5l0.6 0.6v6.9h-12.5l-0.6-0.6v-6.3z" fill="#e2e2e2" stroke="#8a8a8a" stroke-width="0.9"/>
<rect x="15" y="8" width="1.2" height="7" fill="#000"/>
<rect x="3" y="14.8" width="12.8" height="1.2" fill="#000"/>
<path d="M4 10.5h7M4 12.5h8.5" stroke="#707070" stroke-width="0.9"/>
<rect x="11.2" y="9.8" width="1.3" height="1.3" fill="#000"/>
<path d="M4 8.8h10.5" stroke="#fff" stroke-width="0.8"/></svg>
<div class="lbl" style="left:82px;top:388px;width:191px;"><span style="transform:scaleX(0.9731)">Standard-Zweikanal-PCI-IDE-Controller</span></div>
<svg class="ic" style="left:44px;top:404px" width="16" height="16" viewBox="0 0 16 16"><path d="M1 7L6 4.5H12L16 8L10 11L3 10z" fill="#e4e4e4" stroke="#808080" stroke-width="0.7"/>
<path d="M3 10L10 11L16 8V10.5L10 13.5L3 12.2z" fill="#5a5a5a"/>
<path d="M1 7L3 10V12.2L1 9z" fill="#9a9a9a"/>
<rect x="12.5" y="8.6" width="2" height="2.2" fill="#000"/>
<path d="M4 6L6.5 5" stroke="#404040" stroke-width="1.2"/>
<path d="M4 11.2L9.5 12.3" stroke="#a8a8a8" stroke-width="0.7"/></svg>
<div class="exp" style="left:29px;top:408px"><i class="ph"></i><i class="pv"></i></div>
<div class="lbl" style="left:63px;top:404px;width:54px;"><span style="transform:scaleX(0.9922)">Laufwerke</span></div>
<svg class="ic" style="left:44px;top:420px" width="16" height="16" viewBox="0 0 16 16"><path d="M1 2.5c1.5-1.5 4-1.5 5.5 0" fill="none" stroke="#a8a8a8" stroke-width="2"/>
<path d="M5.5 2.5C9 1.2 13.5 3.5 15.3 8C16.6 11.8 15 15.6 11.3 15.4C7.5 15.2 4.3 11.5 3.6 7.5C3.2 5.2 4 3.2 5.5 2.5z" fill="#f6f6fa" stroke="#6a6a72" stroke-width="1"/>
<path d="M15.2 10c0.3 2.5-0.8 4.8-3 5.2" stroke="#502848" stroke-width="1.1" fill="none"/>
<ellipse cx="8.3" cy="5.3" rx="1.2" ry="1" fill="#404040"/></svg>
<div class="exp" style="left:29px;top:424px"><i class="ph"></i><i class="pv"></i></div>
<div class="lbl" style="left:63px;top:420px;width:154px;"><span style="transform:scaleX(0.9850)">Mäuse und andere Zeigegeräte</span></div>
<svg class="ic" style="left:44px;top:436px" width="16" height="16" viewBox="0 0 16 16"><ellipse cx="9.3" cy="13.3" rx="5.2" ry="2.4" fill="#9088b8"/>
<ellipse cx="8.8" cy="12.9" rx="3.5" ry="1.4" fill="#f8f8ff"/>
<path d="M5 0.8h8.5c0.6 0 1 0.4 1 1V10.8c0 0.6-0.4 1-1 1H5.2c-0.6 0-1-0.4-1-1V1.8c0-0.6 0.3-1 0.8-1z" fill="url(#gmo)" stroke="#607888" stroke-width="0.7"/>
<path d="M4.8 4.6l9.4 0.6" stroke="#8860b8" stroke-width="1.3"/>
<path d="M9 11.3q3.5-0.8 5-3v2.6q0 0.6-0.6 0.6z" fill="#5040a8" opacity="0.8"/></svg>
<div class="exp" style="left:29px;top:440px"><i class="ph"></i><i class="pv"></i></div>
<div class="lbl" style="left:63px;top:436px;width:46px;"><span style="transform:scaleX(0.9860)">Monitore</span></div>
<svg class="ic" style="left:44px;top:452px" width="16" height="16" viewBox="0 0 16 16"><rect x="0.8" y="3.3" width="14.2" height="8.4" fill="#2a7a2a" stroke="#0a3a0a" stroke-width="1.1"/>
<rect x="2.2" y="4.8" width="1.8" height="1.4" fill="#d0f8d0"/>
<rect x="2.2" y="6.9" width="1.8" height="1.4" fill="#d0f8d0"/>
<rect x="2.2" y="9" width="1.8" height="1.4" fill="#d0f8d0"/>
<rect x="4.8" y="4.8" width="2" height="1.4" fill="#90d890"/>
<rect x="4.8" y="6.9" width="2" height="1.4" fill="#90d890"/>
<rect x="4.8" y="9" width="2" height="1.4" fill="#90d890"/>
<rect x="7.5" y="4.5" width="2.5" height="3.5" fill="#70c870"/>
<rect x="10.6" y="4.5" width="2.6" height="3.5" fill="#58b058"/>
<rect x="7.5" y="8.5" width="5.7" height="2.5" fill="#1a601a"/>
<rect x="8.5" y="9.2" width="1" height="1" fill="#000"/>
<rect x="14.8" y="4.5" width="1.2" height="6" fill="#203020"/>
<rect x="7" y="11.8" width="6" height="1.3" fill="#c8e090"/>
<rect x="7.5" y="13" width="6" height="1.3" fill="#101010"/></svg>
<div class="exp" style="left:29px;top:456px"><i class="ph"></i><i class="pv"></i></div>
<div class="lbl" style="left:63px;top:452px;width:87px;"><span style="transform:scaleX(1.0060)">Netzwerkadapter</span></div>
<svg class="ic" style="left:44px;top:468px" width="16" height="16" viewBox="0 0 16 16"><path d="M8.5 1.5L16 6.5V8.5L8.5 13.5L1 8.5V6.5z" fill="#000"/>
<path d="M2.3 6.6L8.5 9.8L14.7 6.6" fill="none" stroke="#e8e8e8" stroke-width="0.9" stroke-dasharray="1.3 0.9"/>
<path d="M2.2 10.5v2.2M4.6 11.8v2.4M7 13v2M10 13v2M12.4 11.8v2.4M14.8 10.5v2.2" stroke="#a0a0a0" stroke-width="1.2"/>
<path d="M3.4 9.5v2.5M5.8 10.8v2.6M11.2 10.8v2.6M13.6 9.5v2.5" stroke="#000" stroke-width="1"/></svg>
<div class="exp" style="left:29px;top:472px"><i class="ph"></i><i class="pv"></i></div>
<div class="lbl" style="left:63px;top:468px;width:63px;"><span style="transform:scaleX(0.9721)">Prozessoren</span></div>
<svg class="ic" style="left:44px;top:484px" width="16" height="16" viewBox="0 0 16 16"><path d="M13 4.6L8.8 1L1.4 8L8.8 15L13 11.4" fill="none" stroke="#000" stroke-width="3.1" stroke-linejoin="miter" stroke-linecap="butt"/>
<path d="M13.4 4.6L8.8 1L1.4 8L8.8 15L13.4 11.4" fill="none" stroke="#e0e0e0" stroke-width="1"/>
<rect x="8.2" y="6.3" width="7.3" height="3.6" fill="#c4c4c4" stroke="#000" stroke-width="1.3"/></svg>
<div class="exp" style="left:29px;top:488px"><i class="ph"></i><i class="pv"></i></div>
<div class="lbl" style="left:63px;top:484px;width:131px;"><span style="transform:scaleX(0.9644)">SCSI- und RAID-Controller</span></div>
<svg class="ic" style="left:44px;top:500px" width="16" height="16" viewBox="0 0 16 16"><ellipse cx="9.6" cy="13.4" rx="5.3" ry="2.5" fill="#a098c8"/>
<ellipse cx="9" cy="13" rx="3.6" ry="1.5" fill="#f4f4ff"/>
<path d="M5.5 0.8h8c0.6 0 1 0.4 1 1V10.8c0 0.6-0.4 1-1 1H5.6c-0.6 0-1-0.4-1-1V1.8c0-0.6 0.4-1 0.9-1z" fill="url(#gpc)" stroke="#8098b0" stroke-width="0.7"/>
<path d="M9 11.5q3-0.5 5.3-4v3.6q0 0.7-0.7 0.7z" fill="#4a40b0" opacity="0.85"/></svg>
<div class="exp" style="left:29px;top:504px"><i class="ph"></i><i class="pv"></i></div>
<div class="lbl" style="left:63px;top:500px;width:72px;"><span style="transform:scaleX(1.0029)">Systemgeräte</span></div>
<svg class="ic" style="left:44px;top:516px" width="16" height="16" viewBox="0 0 16 16"><path d="M1 3.5Q3 1.5 5.5 4" fill="none" stroke="#a8a8b0" stroke-width="2.2"/>
<path d="M1 8.5C2.5 6 8.5 5.5 12.5 6.3C15 6.8 16.5 8.3 16 10.3C15 12.3 10.5 13.2 6.5 13C3 12.8 0.5 11.2 1 8.5z" fill="#c8c8dc" stroke="#9090a8" stroke-width="0.7"/>
<rect x="1.8" y="7.2" width="1" height="1" fill="#ffffff"/><rect x="1.8" y="8.4" width="1" height="1" fill="#5a5a88"/><rect x="3.4000000000000004" y="8.4" width="1" height="1" fill="#ffffff"/><rect x="3.4000000000000004" y="7.2" width="1" height="1" fill="#5a5a88"/><rect x="5.0" y="7.2" width="1" height="1" fill="#ffffff"/><rect x="5.0" y="8.4" width="1" height="1" fill="#5a5a88"/><rect x="6.6000000000000005" y="8.4" width="1" height="1" fill="#ffffff"/><rect x="6.6000000000000005" y="7.2" width="1" height="1" fill="#5a5a88"/><rect x="8.200000000000001" y="7.2" width="1" height="1" fill="#ffffff"/><rect x="8.200000000000001" y="8.4" width="1" height="1" fill="#5a5a88"/><rect x="9.8" y="8.4" width="1" height="1" fill="#ffffff"/><rect x="9.8" y="7.2" width="1" height="1" fill="#5a5a88"/><rect x="11.400000000000002" y="7.2" width="1" height="1" fill="#ffffff"/><rect x="11.400000000000002" y="8.4" width="1" height="1" fill="#5a5a88"/><rect x="13.000000000000002" y="8.4" width="1" height="1" fill="#ffffff"/><rect x="13.000000000000002" y="7.2" width="1" height="1" fill="#5a5a88"/>
<path d="M11 12.6C13.5 12.3 15.6 11.5 16 10" fill="none" stroke="#5a5a80" stroke-width="1.2"/></svg>
<div class="exp" style="left:29px;top:520px"><i class="ph"></i><i class="pv"></i></div>
<div class="lbl" style="left:63px;top:516px;width:57px;"><span style="transform:scaleX(1.0490)">Tastaturen</span></div>
<svg class="ic" style="left:44px;top:532px" width="16" height="16" viewBox="0 0 16 16"><path d="M5 5.5L8 2" stroke="#000" stroke-width="1.5"/>
<rect x="7.7" y="0.8" width="3" height="3" rx="1" fill="#c0c0c0" stroke="#000" stroke-width="1.1"/>
<path d="M6 9.5l1.5 4h2" fill="none" stroke="#000" stroke-width="1.5"/>
<rect x="9.2" y="12" width="3.8" height="3.5" fill="#c8c8c8" stroke="#000" stroke-width="1.1"/>
<rect x="1.2" y="5" width="4.5" height="6" rx="1.2" fill="#b0b0b0" stroke="#000" stroke-width="1.2"/>
<path d="M5.5 6.8h7.5v2.4H5.5z" fill="#a0a0a0" stroke="#000" stroke-width="1.2"/>
<path d="M12.5 4.8l3.5 3.2l-3.5 3.2z" fill="#000"/></svg>
<div class="exp" style="left:29px;top:536px"><i class="ph"></i><i class="pv"></i></div>
<div class="lbl" style="left:63px;top:532px;width:74px;"><span style="transform:scaleX(0.9527)">USB-Controller</span></div>
 <div class="a" id="status"></div>
 <div class="a" style="left:4px;top:562px;width:632px;height:1px;background:#B0AC9C"></div>
 <div class="a" style="left:4px;top:584px;width:632px;height:1px;background:#DCE6F4"></div>
 <div class="a" style="left:414px;top:563px;width:1px;height:21px;background:#D4D0BF"></div>
 <div class="a" style="left:415px;top:563px;width:1px;height:21px;background:#FFFFFF"></div>
 <div class="a" style="left:547px;top:563px;width:1px;height:21px;background:#D4D0BF"></div>
 <div class="a" style="left:548px;top:563px;width:1px;height:21px;background:#FFFFFF"></div>
 <div class="a" style="left:632px;top:566px;width:1px;height:18px;background:#D4D0BF"></div>
 <div class="a" style="left:633px;top:566px;width:2px;height:18px;background:#FFFFFF"></div>
</div>
</body></html>
